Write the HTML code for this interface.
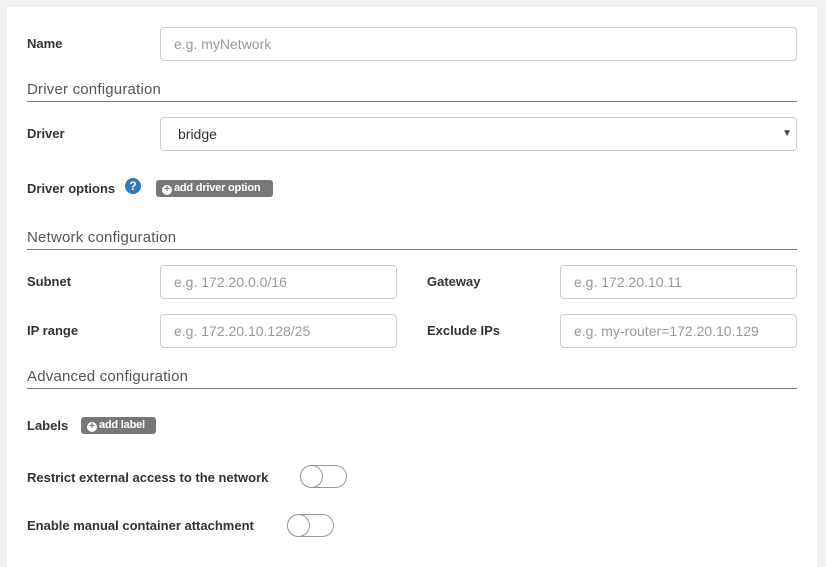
<!DOCTYPE html>
<html><head><meta charset="utf-8"><style>
body{margin:0;width:826px;height:550px;background:#f2f2f2;font-family:"Liberation Sans",sans-serif;position:relative;overflow:hidden}
.panel{position:absolute;left:7px;top:7px;width:810px;height:560px;background:#fff}
.a{position:absolute}
.lbl{font-size:13px;font-weight:bold;color:#333}
.inp{position:absolute;border:1px solid #ccc;border-radius:4px;box-sizing:border-box;height:34px;font-size:14px;color:#999;padding-left:13px;line-height:32px}
.sec{position:absolute;left:27px;width:770px;font-size:15px;color:#555;border-bottom:1px solid #777;padding-bottom:3px;letter-spacing:.2px}
.btn{position:absolute;background:#777;color:#fff;font-size:11px;font-weight:bold;border-radius:3px;height:17px;line-height:17px;box-sizing:border-box;padding-left:6px;letter-spacing:-.2px;white-space:nowrap}
.btn b{display:inline-block;width:10px;height:10px;border-radius:50%;background:#fff;color:#777;font-size:10px;line-height:10px;text-align:center;vertical-align:-1px;margin-right:2px}
.tog{position:absolute;width:47px;height:23px;border:1px solid #999;border-radius:12px;box-sizing:border-box}
.tog:after{content:"";position:absolute;left:-1px;top:-1px;width:23px;height:23px;border:1px solid #999;border-radius:50%;box-sizing:border-box;background:#fff}
</style></head><body>
<div class="panel"></div>
<div class="a lbl" style="left:27px;top:36px">Name</div>
<div class="inp" style="left:160px;top:27px;width:637px">e.g. myNetwork</div>
<div class="sec" style="top:81px">Driver configuration</div>
<div class="a lbl" style="left:27px;top:126px">Driver</div>
<div class="inp" style="left:160px;top:117px;width:637px;color:#333;padding-left:17px">bridge<span style="position:absolute;right:4px;top:0;font-size:10px;color:#444">▼</span></div>
<div class="a lbl" style="left:27px;top:181px">Driver options</div>
<div class="a" style="left:125px;top:178px;width:16px;height:16px;border-radius:50%;background:#337ab7;color:#fff;font-size:12px;font-weight:bold;text-align:center;line-height:16px">?</div>
<div class="btn" style="left:156px;top:180px;width:117px"><b>+</b>add driver option</div>
<div class="sec" style="top:229px">Network configuration</div>
<div class="a lbl" style="left:27px;top:274px">Subnet</div>
<div class="inp" style="left:160px;top:265px;width:237px">e.g. 172.20.0.0/16</div>
<div class="a lbl" style="left:427px;top:274px">Gateway</div>
<div class="inp" style="left:560px;top:265px;width:237px">e.g. 172.20.10.11</div>
<div class="a lbl" style="left:27px;top:323px">IP range</div>
<div class="inp" style="left:160px;top:314px;width:237px">e.g. 172.20.10.128/25</div>
<div class="a lbl" style="left:427px;top:323px">Exclude IPs</div>
<div class="inp" style="left:560px;top:314px;width:237px">e.g. my-router=172.20.10.129</div>
<div class="sec" style="top:368px">Advanced configuration</div>
<div class="a lbl" style="left:27px;top:418px">Labels</div>
<div class="btn" style="left:81px;top:417px;width:75px"><b>+</b>add label</div>
<div class="a lbl" style="left:27px;top:470px">Restrict external access to the network</div>
<div class="tog" style="left:300px;top:465px"></div>
<div class="a lbl" style="left:27px;top:518px">Enable manual container attachment</div>
<div class="tog" style="left:287px;top:514px"></div>
</body></html>
